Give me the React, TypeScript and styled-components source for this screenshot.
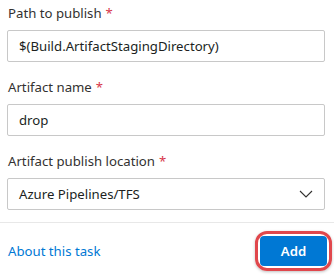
import styled, { createGlobalStyle } from 'styled-components';

const GlobalStyle = createGlobalStyle`
  body {
    margin: 0;
    background: #ffffff;
    font-family: 'Segoe UI', 'Noto Sans', 'Liberation Sans', sans-serif;
  }
`;

const Panel = styled.div`
  width: 334px;
  height: 277px;
  display: flex;
  flex-direction: column;
  overflow: hidden;
`;

const Form = styled.div`
  padding: 3px 9px 0 7px;
  display: flex;
  flex-direction: column;
`;

const Field = styled.div`
  display: flex;
  flex-direction: column;
  margin-bottom: 15px;

  &:last-child {
    margin-bottom: 12px;
  }
`;

const Label = styled.label`
  height: 20px;
  line-height: 20px;
  font-size: 13.2px;
  color: #323130;
  padding-left: 1px;
  margin-bottom: 7px;
`;

const Required = styled.span`
  color: #d8374a;
  margin-left: 4px;
`;

const Input = styled.div`
  box-sizing: border-box;
  height: 32px;
  border: 1px solid #c8c8c8;
  border-radius: 2px;
  padding: 0 11px;
  display: flex;
  align-items: center;
  justify-content: space-between;
  font-size: 13.2px;
  color: #201f1e;
`;

const Chevron = () => (
  <svg width="14" height="8" viewBox="0 0 14 8">
    <path d="M1 1l6 6 6-6" fill="none" stroke="#323130" strokeWidth="1.1" />
  </svg>
);

const Footer = styled.div`
  border-top: 1px solid #e8e8e8;
  display: flex;
  align-items: center;
  justify-content: space-between;
  padding: 8px 2px 0 8px;
`;

const Link = styled.a`
  font-size: 13.2px;
  color: #0078d4;
  text-decoration: none;
`;

const Highlight = styled.div`
  border: 3px solid #e0474c;
  border-radius: 12px;
  padding: 2px;
  box-shadow: 0 1px 3px rgba(0, 0, 0, 0.25);
`;

const Button = styled.button`
  display: block;
  width: 67px;
  height: 30px;
  border: none;
  border-radius: 4px;
  background: #0078d4;
  color: #ffffff;
  font-family: inherit;
  font-size: 13.2px;
  font-weight: 600;
`;

export default function App() {
  return (
    <Panel>
      <GlobalStyle />
      <Form>
        <Field>
          <Label>
            Path to publish<Required>*</Required>
          </Label>
          <Input>$(Build.ArtifactStagingDirectory)</Input>
        </Field>
        <Field>
          <Label>
            Artifact name<Required>*</Required>
          </Label>
          <Input>drop</Input>
        </Field>
        <Field>
          <Label>
            Artifact publish location<Required>*</Required>
          </Label>
          <Input>
            Azure Pipelines/TFS
            <Chevron />
          </Input>
        </Field>
      </Form>
      <Footer>
        <Link href="#">About this task</Link>
        <Highlight>
          <Button>Add</Button>
        </Highlight>
      </Footer>
    </Panel>
  );
}
